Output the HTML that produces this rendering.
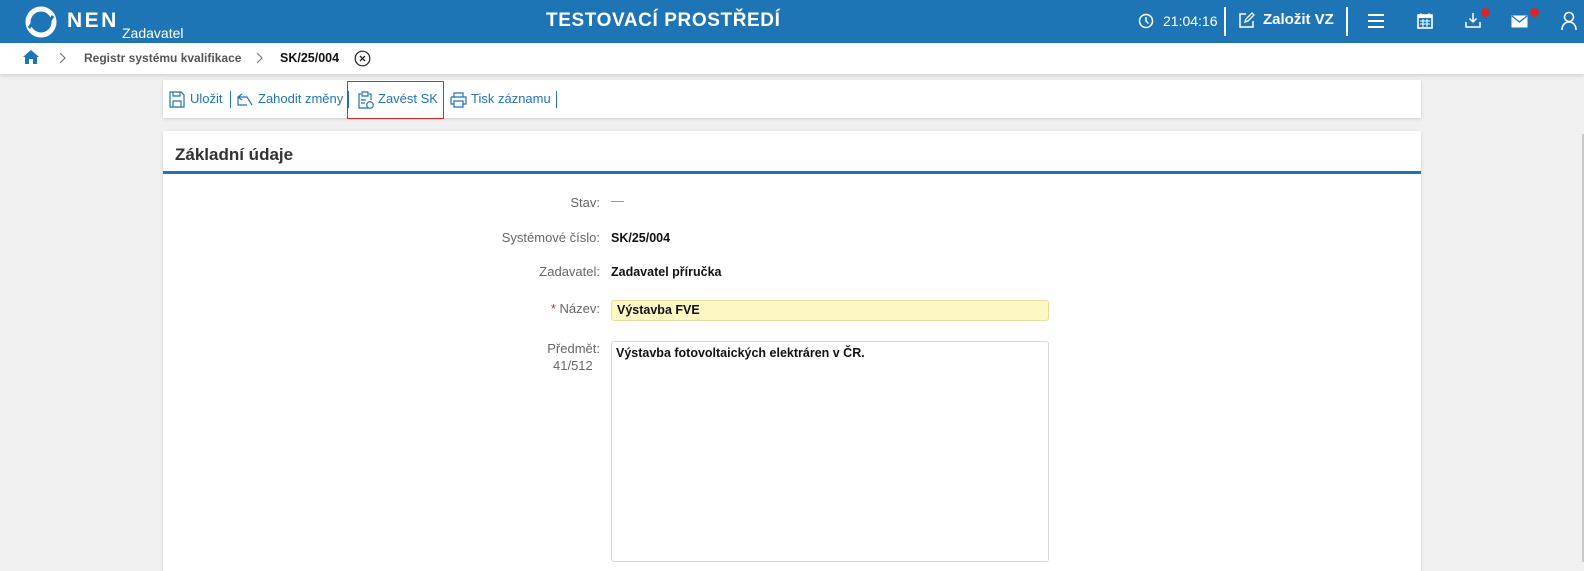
<!DOCTYPE html>
<html><head><meta charset="utf-8"><style>
*{box-sizing:border-box;margin:0;padding:0}
body{width:1584px;height:562px;overflow:hidden;background:#f0f0f0;font-family:"Liberation Sans",Arial,sans-serif;position:relative;font-size:13px;color:#222}
.hdr{position:absolute;left:0;top:0;width:1584px;height:43px;background:#1e75b5;color:#fff}
.abs{position:absolute}
.bc{position:absolute;left:0;top:43px;width:1584px;height:31px;background:#fff;box-shadow:0 2px 4px rgba(0,0,0,.12)}
.card{position:absolute;background:#fff;box-shadow:0 1px 3px rgba(0,0,0,.15)}
.tb a{color:#1e75b5;position:absolute;top:11px;font-size:13px}
.sep{position:absolute;top:11px;width:1px;height:17px;background:#1e75b5}
.lbl{position:absolute;right:984px;color:#666;font-size:13px;text-align:right}
.val{position:absolute;left:611px;font-weight:bold;font-size:12.5px;color:#111}
.dot{position:absolute;width:9px;height:9px;border-radius:50%;background:#d9262c}
</style></head><body>
<div class="hdr">
 <svg class="abs" style="left:25px;top:6px" width="32" height="32" viewBox="0 0 32 32"><circle cx="16" cy="16" r="13" fill="none" stroke="#fff" stroke-width="5"/><path d="M4 22 L12 10" stroke="#1e75b5" stroke-width="3"/><path d="M28 10 L20 22" stroke="#1e75b5" stroke-width="3"/></svg>
 <div class="abs" style="left:67px;top:9px;font-size:21px;font-weight:bold;letter-spacing:2.5px">NEN</div>
 <div class="abs" style="left:122px;top:25px;font-size:14px">Zadavatel</div>
 <div class="abs" style="left:546px;top:10px;font-size:19px;font-weight:bold;letter-spacing:.6px">TESTOVACÍ PROSTŘEDÍ</div>
 <svg class="abs" style="left:1138px;top:13px" width="16" height="16" viewBox="0 0 16 16"><circle cx="8" cy="8" r="6.5" fill="none" stroke="#fff" stroke-width="1.5"/><path d="M8 4v4l2.5 2.5" fill="none" stroke="#fff" stroke-width="1.5"/></svg>
 <div class="abs" style="left:1163px;top:13px;font-size:14px">21:04:16</div>
 <div class="abs" style="left:1224px;top:7px;width:2px;height:29px;background:#fff"></div>
 <svg class="abs" style="left:1238px;top:12px" width="17" height="17" viewBox="0 0 17 17"><path d="M8 2H2v13h13V9" fill="none" stroke="#fff" stroke-width="1.5"/><path d="M7 10l1-3 6-6 2 2-6 6z" fill="none" stroke="#fff" stroke-width="1.3"/></svg>
 <div class="abs" style="left:1263px;top:11px;font-size:15px;font-weight:bold">Založit VZ</div>
 <div class="abs" style="left:1346px;top:7px;width:2px;height:29px;background:#fff"></div>
 <svg class="abs" style="left:1368px;top:14px" width="16" height="14"><path d="M0 1h16M0 7h16M0 13h16" stroke="#fff" stroke-width="2"/></svg>
 <svg class="abs" style="left:1417px;top:12px" width="16" height="17" viewBox="0 0 16 17"><rect x="1" y="3" width="14" height="13" fill="none" stroke="#fff" stroke-width="1.6"/><rect x="1" y="3" width="14" height="3" fill="#fff"/><path d="M4 1v3M12 1v3M3 9h10M3 12h10M6 7v8M10 7v8" stroke="#fff" stroke-width="1"/></svg>
 <svg class="abs" style="left:1465px;top:12px" width="16" height="17" viewBox="0 0 16 17"><path d="M8 1v9M4.5 6.5L8 10l3.5-3.5M1 10v5h14v-5" fill="none" stroke="#fff" stroke-width="1.5"/></svg>
 <div class="dot" style="left:1481px;top:8px"></div>
 <svg class="abs" style="left:1511px;top:15px" width="17" height="13" viewBox="0 0 17 13"><rect x=".5" y=".5" width="16" height="12" fill="#fff"/><path d="M1 1l7.5 6L16 1" fill="none" stroke="#1e75b5" stroke-width="1.3"/></svg>
 <div class="dot" style="left:1530px;top:8px"></div>
 <svg class="abs" style="left:1561px;top:11px" width="16" height="20" viewBox="0 0 16 20"><circle cx="8" cy="6" r="4.5" fill="none" stroke="#fff" stroke-width="1.6"/><path d="M1 19c0-5 3-8 7-8s7 3 7 8" fill="none" stroke="#fff" stroke-width="1.6"/></svg>
</div>
<div class="bc">
 <svg class="abs" style="left:23px;top:7px" width="16" height="14" viewBox="0 0 16 14"><path d="M8 0L0 7h2v7h4V9h4v5h4V7h2z" fill="#1e75b5"/></svg>
 <svg class="abs" style="left:59px;top:9px" width="8" height="12"><path d="M1 1l5 5-5 5" fill="none" stroke="#777" stroke-width="1.2"/></svg>
 <div class="abs" style="left:84px;top:8px;font-weight:bold;color:#555;font-size:12px">Registr systému kvalifikace</div>
 <svg class="abs" style="left:256px;top:9px" width="8" height="12"><path d="M1 1l5 5-5 5" fill="none" stroke="#777" stroke-width="1.2"/></svg>
 <div class="abs" style="left:280px;top:8px;font-weight:bold;color:#111;font-size:12.5px">SK/25/004</div>
 <svg class="abs" style="left:354px;top:7px" width="17" height="17" viewBox="0 0 17 17"><circle cx="8.5" cy="8.5" r="7.3" fill="none" stroke="#222" stroke-width="1.2"/><path d="M6 6l5 5M11 6l-5 5" stroke="#222" stroke-width="1.3"/></svg>
</div>
<div class="card tb" style="left:163px;top:80px;width:1258px;height:38px">
 <svg class="abs" style="left:6px;top:11px" width="16" height="17" viewBox="0 0 16 17"><path d="M1 1h11l3 3v12H1z M4 1v4h7V1 M4 16v-6h8v6" fill="none" stroke="#1e75b5" stroke-width="1.2"/></svg>
 <a style="left:27px">Uložit</a><div class="sep" style="left:67px"></div>
 <svg class="abs" style="left:74px;top:13px" width="17" height="13" viewBox="0 0 17 13"><path d="M1 4h9l5 8M1 4v8h9M5 1L1 4l4 3" fill="none" stroke="#1e75b5" stroke-width="1.2"/></svg>
 <a style="left:95px">Zahodit změny</a><div class="sep" style="left:185px"></div>
 <svg class="abs" style="left:195px;top:11px" width="16" height="18" viewBox="0 0 16 18"><path d="M3 3H1v14h9M11 3h2v6M4 1h6v4H4z M3 9h5M3 12h4" fill="none" stroke="#1e75b5" stroke-width="1.2"/><circle cx="12" cy="14" r="3.3" fill="none" stroke="#1e75b5" stroke-width="1.2"/></svg>
 <a style="left:215px">Zavést SK</a><div class="sep" style="left:280px"></div>
 <svg class="abs" style="left:287px;top:12px" width="17" height="16" viewBox="0 0 17 16"><path d="M4 5V1h9v4M1 5h15v7h-3M4 12H1V5M4 9h9v6H4z" fill="none" stroke="#1e75b5" stroke-width="1.2"/></svg>
 <a style="left:308px">Tisk záznamu</a><div class="sep" style="left:393px"></div>
</div>
<div class="abs" style="left:347px;top:81px;width:97px;height:38px;border:1px solid #e0242c"></div>
<div class="card" style="left:163px;top:131px;width:1258px;height:440px">
 <div class="abs" style="left:12px;top:14px;font-size:17px;font-weight:bold;color:#333">Základní údaje</div>
 <div class="abs" style="left:0;top:40px;width:1258px;height:3px;background:#1e75b5"></div>
</div>
<div class="lbl" style="top:195px">Stav:</div><div class="abs" style="left:611px;top:193px;color:#888">—</div>
<div class="lbl" style="top:230px">Systémové číslo:</div><div class="val" style="top:231px">SK/25/004</div>
<div class="lbl" style="top:264px">Zadavatel:</div><div class="val" style="top:265px">Zadavatel příručka</div>
<div class="lbl" style="top:301px"><span style="color:#d9262c">*</span>&nbsp;Název:</div>
<div class="abs" style="left:611px;top:300px;width:438px;height:21px;background:#fdf7c3;border:1px solid #e6dc9c;border-radius:3px;padding:2px 5px;font-weight:bold;color:#111;font-size:12.5px">Výstavba FVE</div>
<div class="lbl" style="top:340px;line-height:17px">Předmět:<br>41/512&nbsp;&nbsp;</div>
<div class="abs" style="left:611px;top:341px;width:438px;height:221px;background:#fff;border:1px solid #d8d8d8;border-radius:3px;padding:4px 4px;font-weight:bold;color:#111;font-size:12.5px">Výstavba fotovoltaických elektráren v ČR.</div>
<div class="abs" style="left:1582px;top:134px;width:2px;height:428px;background:#c8c8c8"></div>
</body></html>
